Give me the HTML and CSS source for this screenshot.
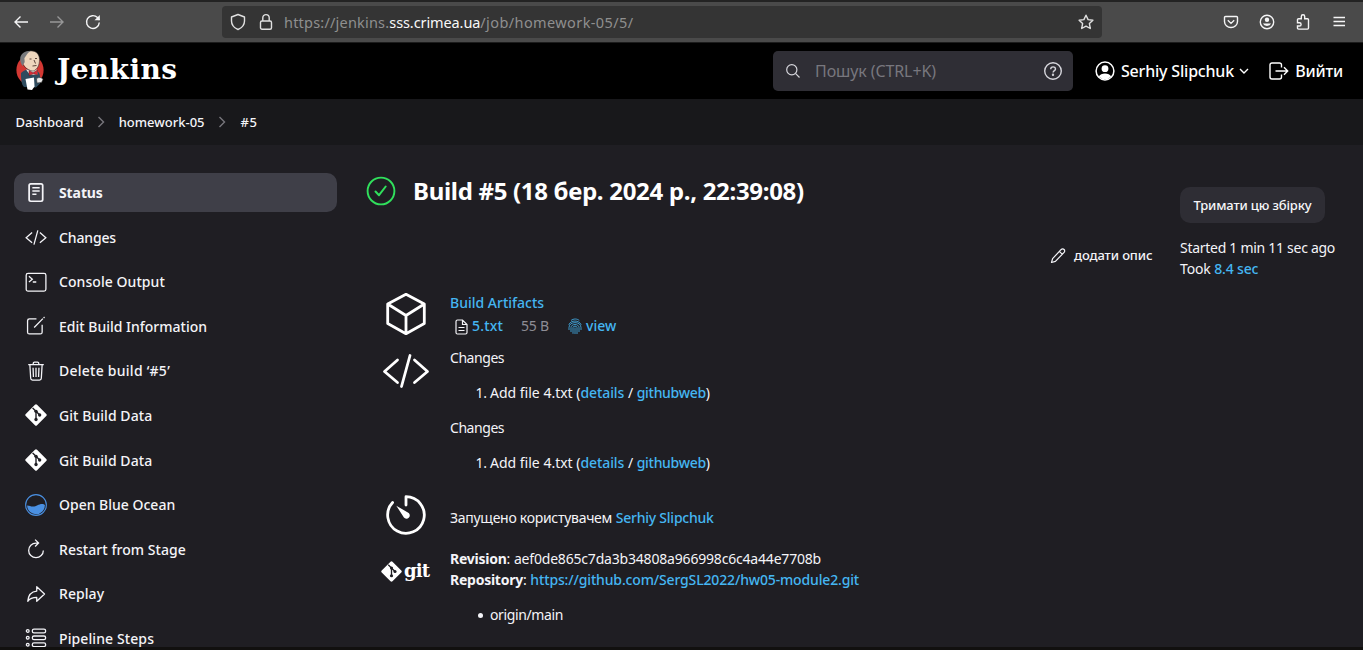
FILE: index.html
```
<!DOCTYPE html>
<html lang="uk">
<head>
<meta charset="utf-8">
<title>homework-05 #5 [Jenkins]</title>
<link rel="stylesheet" href="styles.css">
</head>
<body>
<svg width="0" height="0" class="defs">
  <symbol id="git" viewBox="0 0 24 24"><rect x="3.300" y="3.300" width="17.400" height="17.400" rx="1.600" transform="rotate(45 12 12)" fill="#fff" stroke="none"/><path d="M8.300 4.300 12 8v9M12 8l4 4" stroke="#1f1e23" stroke-width="1.500" fill="none"/><g fill="#1f1e23" stroke="none"><circle cx="12" cy="8" r="1.800"/><circle cx="12" cy="16.900" r="1.800"/><circle cx="16" cy="12" r="1.800"/></g></symbol>
  <symbol id="code" viewBox="0 0 48 36"><path d="M15.500 7 2.500 18.500l13 11M32.500 7l13 11.500-13 11M28 2.500l-8.500 31"/></symbol>
</svg>

<div class="toolbar">
  <div class="nav">
    <svg width="16" height="16" viewBox="0 0 16 16"><path d="M15 8H2M7.500 2.500 2 8l5.500 5.500"/></svg>
    <svg class="off" width="16" height="16" viewBox="0 0 16 16"><path d="M1 8h13M8.500 2.500 14 8l-5.500 5.500"/></svg>
    <svg width="16" height="16" viewBox="0 0 16 16"><path d="M14.300 8.500A6.400 6.400 0 1 1 12.500 3.600L14.500 6"/><path d="M14.800 1v5.300H9.500z" fill="currentColor" stroke="none"/></svg>
  </div>
  <div class="urlbar">
    <svg width="16" height="18" viewBox="0 0 16 18"><path d="M8 1.500 14.500 4v4c0 4-3 7-6.500 8.500C4.500 15 1.500 12 1.500 8V4z" stroke-linejoin="round"/></svg>
    <svg width="14" height="18" viewBox="0 0 14 18"><rect x="1.500" y="8" width="11" height="8.300" rx="1.500"/><path d="M3.800 8V4.800a3.200 3.200 0 0 1 6.400 0V8"/></svg>
    <div class="url"><span class="u1">https://jenkins.</span><span class="host">sss.crimea.ua</span><span class="u2">/job/homework-05/5/</span></div>
    <svg width="16" height="16" viewBox="0 0 16 16"><path d="m8 1.200 2.100 4.400 4.800.6-3.500 3.400.9 4.900L8 12.100l-4.300 2.400.9-4.900L1.100 6.200l4.800-.6z" stroke-linejoin="round"/></svg>
  </div>
  <div class="tools">
    <svg width="16" height="16" viewBox="0 0 16 16"><path d="M2.500 2.500h11a1 1 0 0 1 1 1V7.500a6.500 6 0 0 1-13 0v-4a1 1 0 0 1 1-1zM4.800 6.300 8 9.400l3.200-3.100"/></svg>
    <svg width="16" height="16" viewBox="0 0 16 16"><circle cx="8" cy="8" r="6.700"/><circle cx="8" cy="5.800" r="2.200" fill="currentColor" stroke="none"/><path d="M3.900 9.500h8.200a4.300 3.500 0 0 1-8.200 0z" fill="currentColor" stroke="none"/></svg>
    <svg width="16" height="16" viewBox="0 0 16 16"><path d="M2.500 8V5.700a1 1 0 0 1 1-1h2.800V2.500a1.700 1.700 0 0 1 3.400 0v2.200h2.800a1 1 0 0 1 1 1v8.400a1 1 0 0 1-1 1h-9a1 1 0 0 1-1-1V12h2a1.600 1.600 0 0 0 0-3.200h-2z"/></svg>
    <svg width="16" height="16" viewBox="0 0 16 16"><path d="M2.500 3.500h11.500M2.500 7.500h11.500M2.500 11.500h11.500"/></svg>
  </div>
</div>

<header class="header">
  <svg class="butler" width="30" height="40" viewBox="0 0 30 40">
    <g stroke="none">
    <ellipse cx="15" cy="20" rx="13.600" ry="15" fill="#d33833"/>
    <path d="M6 23c2-2 4-3 6-3.500l8 1c4 1 5 3 5 7v6l-4 4-12-.5C6 34 6 28 6 23z" fill="#2e4b5e"/>
    <path d="M11 19.500 15 25l8-.5-1-5z" fill="#f0e8df"/>
    <path d="M7 9c0-5 5-8 9.500-8 5.500 0 8 4 8 9 0 6-2.500 9.500-6.500 10.500-5.500 0-10.500-5-11-11.500z" fill="#eed6bd"/>
    <path d="M16.500.8C10 .6 5 4 5.200 9c-.2 3 1.300 5.500 2.500 7l2-4-.3-4C11.500 6 11.500 3 16.500.8z" fill="#77797c"/>
    <path d="M10.500 29l8.500-1.500.5 9-2.500 3.500-4.500-.5z" fill="#fff"/>
    </g>
    <path d="M16 .8c5.500 0 8.500 3.900 8.500 8.800 0 6-2.500 10.500-6.500 11.500-4-.4-7.500-2.500-9.500-6" stroke="#332c2b" stroke-width=".6"/>
    <path d="M14.500 9h2M20 8.500h2M19 10l1.500 3.500M17.500 16l4-.5" stroke="#4b332b" stroke-width=".9"/>
    <path d="m14 20.500 4 2.200 4.500-2.700v5l-4-1.200-4.500 1.700z" fill="#d62b36" stroke="#5c1e24" stroke-width=".5"/>
    <path d="M21.500 29c2-2.500 5.500-1.500 6.500.5l-1.500 3-4.500.5z" fill="#e8e8e8" stroke="#333" stroke-width=".6"/>
  </svg>
  <div class="brand">Jenkins</div>
  <div class="search">
    <svg width="16" height="16" viewBox="0 0 16 16" class="thin"><circle cx="6.800" cy="6.800" r="5.100"/><path d="m10.700 10.700 3.800 3.800"/></svg>
    <span class="ph">Пошук (CTRL+K)</span>
    <svg width="20" height="20" viewBox="0 0 20 20" class="help"><circle cx="10" cy="10" r="8.300"/><path d="M7.700 8.200c0-3.200 4.800-3 4.800-.3 0 1.800-2.400 1.700-2.400 3.700"/><circle cx="10" cy="13.800" r=".5"/></svg>
  </div>
  <div class="user">
    <svg width="20" height="20" viewBox="0 0 20 20"><circle cx="10" cy="10" r="8.900" stroke-width="1.500"/><circle cx="10" cy="7.700" r="3.400" fill="#fff" stroke="none"/><path d="M3.800 15.500c2-4 10.400-4 12.400 0a8.500 8.500 0 0 1-12.400 0z" fill="#fff" stroke="none"/></svg>
    <span class="uname">Serhiy Slipchuk</span>
    <svg width="10" height="8" viewBox="0 0 10 8"><path d="m1 2 4 4 4-4"/></svg>
  </div>
  <div class="logout">
    <svg width="20" height="18" viewBox="0 0 20 18"><path d="M12.500 5.500V3a2 2 0 0 0-2-2H3a2 2 0 0 0-2 2v12a2 2 0 0 0 2 2h7.500a2 2 0 0 0 2-2v-2.500M6.500 9H18.500M15 5.300 18.700 9 15 12.700" stroke-width="1.400"/></svg>
    <span>Вийти</span>
  </div>
</header>

<nav class="crumbs">
  <span>Dashboard</span>
  <svg width="8" height="12" viewBox="0 0 8 12"><path d="m1.500 1 5 5-5 5"/></svg>
  <span>homework-05</span>
  <svg width="8" height="12" viewBox="0 0 8 12"><path d="m1.500 1 5 5-5 5"/></svg>
  <span class="num">#5</span>
</nav>

<div class="page">
  <aside class="side">
    <div class="item active"><svg viewBox="0 0 24 24"><rect x="4.500" y="2" width="14.800" height="19" rx="1.800" stroke-width="1.900"/><path d="M8 6.300h8M8 9.800h8M8 13.300h4.500" stroke-width="1.500"/></svg><span>Status</span></div>
    <div class="item"><svg viewBox="0 0 48 36" class="c1"><use href="#code"/></svg><span class="t2">Changes</span></div>
    <div class="item"><svg viewBox="0 0 24 24"><rect x="1.300" y="2.500" width="21.500" height="19.500" rx="2"/><path d="m4.300 5.800 3.700 3.100-3.700 3.100M8.500 12h3.800"/></svg><span class="t3">Console Output</span></div>
    <div class="item"><svg viewBox="0 0 24 24"><path d="M12.500 4.300H4.800a2 2 0 0 0-2 2v12.400a2 2 0 0 0 2 2h11.900a2 2 0 0 0 2-2V10.500M10 13.700 19.500 4M20.300 3.200l1-1"/></svg><span class="t4">Edit Build Information</span></div>
    <div class="item"><svg viewBox="0 0 24 24"><path d="M3.500 5h17M5.300 5l.9 15a2 2 0 0 0 2 1.900h7.600a2 2 0 0 0 2-1.900l.9-15M9 5V3.500a1.300 1.300 0 0 1 1.300-1.300h3.400A1.300 1.300 0 0 1 15 3.500V5M12 8.500v10M8.800 8.500l.4 10M15.200 8.500l-.4 10"/></svg><span class="t5">Delete build ‘#5’</span></div>
    <div class="item"><svg viewBox="0 0 24 24"><use href="#git"/></svg><span class="t3">Git Build Data</span></div>
    <div class="item"><svg viewBox="0 0 24 24"><use href="#git"/></svg><span class="t3">Git Build Data</span></div>
    <div class="item"><svg viewBox="0 0 24 24"><circle cx="12" cy="12" r="11.300" stroke="#4a90e2" stroke-width="1.200"/><path d="M2.300 12.500c2.700 0 3.700 1.200 6.200 1.200 4.500 0 6.500-3.400 11.300-2.800l1.900 1.200A9.700 9.700 0 0 1 2.300 12.500z" fill="#4a90e2" stroke="none"/></svg><span>Open Blue Ocean</span></div>
    <div class="item"><svg viewBox="0 0 24 24"><path d="M20 13.500A8 8 0 1 1 12 5.500h2.300M11 1.800l3.800 3.700L11 9.200"/></svg><span class="t3">Restart from Stage</span></div>
    <div class="item"><svg viewBox="0 0 24 24"><path d="M12.800 4 21.300 12l-8.500 8v-4.300c-4.700 0-7.600 1.300-9.800 4.300.5-6.200 3.800-10.700 9.800-11.200z" stroke-linejoin="round"/></svg><span class="t3">Replay</span></div>
    <div class="item"><svg viewBox="0 0 24 24"><g stroke-width="1.400"><rect x="8" y="2.300" width="14.500" height="4" rx="1.800"/><rect x="8" y="9.800" width="14.500" height="4" rx="1.800"/><rect x="8" y="17.300" width="14.500" height="4" rx="1.800"/><circle cx="3" cy="4.300" r="1.500"/><circle cx="3" cy="11.800" r="1.500"/><circle cx="3" cy="19.300" r="1.500"/></g></svg><span class="t6">Pipeline Steps</span></div>
  </aside>

  <main class="main">
    <div class="head">
      <svg width="30" height="30" viewBox="0 0 30 30"><circle cx="15" cy="15" r="13.400" stroke="#30e05c" stroke-width="1.900"/><path d="m9.500 15.500 3.500 3.700 6.700-8.700" stroke="#30e05c" stroke-width="2" stroke-linecap="round" stroke-linejoin="round"/></svg>
      <h1>Build #5 (18 бер. 2024 р., 22:39:08)</h1>
    </div>
    <div class="rows">
      <div class="ic cube"><svg width="44" height="44" viewBox="0 0 44 44"><path d="M22 2.300 40.300 12v19.500L22 41.700 3.700 31.500V12zM3.700 12 22 23.500 40.300 12M22 23.500v18" stroke-width="2.800" stroke-linejoin="round"/></svg></div>
      <div class="artifacts">
        <a>Build Artifacts</a>
        <div class="files">
          <svg width="13" height="16" viewBox="0 0 13 16"><path d="M1 2.500A1.500 1.500 0 0 1 2.500 1h5L12 5.500v8a1.500 1.500 0 0 1-1.500 1.500h-8A1.500 1.500 0 0 1 1 13.500zM7.500 1v4.500H12M3.500 8.500h6M3.500 11.500h6" stroke-width="1.200"/></svg>
          <a class="file">5.txt</a><span class="size">55 B</span>
          <svg width="14" height="17" viewBox="0 0 14 17" class="fp"><path d="M3 2.500c2.500-2 6-2 8.300 0M.8 6.800c1.800-5 10.400-5 12.400 0M1 12V9.500c0-6.500 12-6.500 12 0V12M3 14V9.500c0-4 8-4 8 0V14M5 15.800V9.500c0-1.800 4-1.800 4 0V16M7 9.500V16"/></svg>
          <a class="view">view</a>
        </div>
      </div>
      <div class="ic code"><svg width="48" height="36" viewBox="0 0 48 36"><use href="#code"/></svg></div>
      <div class="changes">
        <p class="ch">Changes</p>
        <ol><li><span class="add">Add file 4.txt (</span><a>details</a> / <a class="gw">githubweb</a>)</li></ol>
        <p class="ch">Changes</p>
        <ol><li><span class="add">Add file 4.txt (</span><a>details</a> / <a class="gw">githubweb</a>)</li></ol>
      </div>
      <div class="ic clock"><svg width="44" height="44" viewBox="0 0 44 44"><path d="M22 12V3.700A18.300 18.300 0 1 1 8.600 9.500" stroke-width="2.800" stroke-linecap="round" stroke-linejoin="round"/><path d="M12.300 12.700 24.700 20a3.300 3.300 0 1 1-4.800 4.500z" fill="#fff" stroke="none"/></svg></div>
      <div class="cause"><span class="by">Запущено користувачем</span> <a class="who">Serhiy Slipchuk</a></div>
      <div class="ic gitlogo"><svg width="21" height="21" viewBox="0 0 24 24"><use href="#git"/></svg><b>git</b></div>
      <div class="rev">
        <div><b>Revision</b>: <span class="sha">aef0de865c7da3b34808a966998c6c4a44e7708b</span></div>
        <div><b class="repo">Repository</b>: <a class="link">https://github.com/SergSL2022/hw05-module2.git</a></div>
        <ul><li>origin/main</li></ul>
      </div>
    </div>
  </main>

  <div class="edit">
    <svg width="16" height="16" viewBox="0 0 16 16"><path d="m10.300 2.300.9-.8a1.900 1.900 0 0 1 2.900 2.900l-8.700 9-3.900 1.100 1.100-3.800zM9.300 3.300l2.900 2.900" stroke-width="1.200" stroke-linejoin="round"/></svg>
    <span>додати опис</span>
  </div>
  <div class="info">
    <button class="keep">Тримати цю збірку</button>
    <div class="started">Started 1 min 11 sec ago</div>
    <div class="took">Took <a>8.4 sec</a></div>
  </div>
</div>
<div class="bottom"></div>
</body>
</html>
```
FILE: styles.css
```
* { box-sizing: border-box; }
body {
  margin: 0; height: 650px; overflow: hidden; background: #1f1e23; color: #f4f4f8;
  font: 400 14px/21px "Noto Sans", "Liberation Sans", sans-serif;
  display: flex; flex-direction: column;
}
svg { fill: none; stroke: currentColor; stroke-width: 1.4; flex: none; display: block; }
.defs { position: absolute; }
p, ol, ul, h1 { margin: 0; padding: 0; }
a { color: #45b6f2; font-weight: 500; }
span, a, b, h1 { white-space: nowrap; }

.toolbar {
  height: 43px; flex: none; display: flex; align-items: center; padding: 2px 16px 0 13px;
  background: #4a4a4a; border-top: 2px solid #232323; border-bottom: 1px solid #1c1c1c; color: #f5f5f6;
}
.toolbar > * { margin-top: -2px; }
.nav { display: flex; gap: 20px; width: 209px; }
.off { opacity: .45; }
.urlbar {
  width: 880px; height: 32px; padding: 0 8px; background: #343434; border-radius: 4px;
  display: flex; align-items: center; color: #e0e0e0;
}
.urlbar svg + svg { margin-left: 13px; }
.url { flex: 1; margin-left: 11px; font-size: 14.500px; color: #8f8f8f; }
.u1 { letter-spacing: .2px; }
.host { color: #f8f8f8; letter-spacing: -.1px; }
.u2 { letter-spacing: .4px; }
.tools { display: flex; gap: 20px; margin-left: auto; }

.header { height: 56px; flex: none; background: #000; display: flex; align-items: center; padding: 0 20px 0 15px; color: #fff; }
.butler { margin-top: -2px; }
.brand { margin: -2px 0 0 12px; font: bold 28px/40px "DejaVu Serif", serif; letter-spacing: .4px; width: 716px; }
.search { width: 300px; height: 40px; border-radius: 5px; background: #2f2e35; display: flex; align-items: center; padding: 0 10px 0 12px; color: #d6d6dc; }
.ph { flex: 1; margin-left: 14px; font-size: 16px; color: #78777e; letter-spacing: -.1px; }
.thin { stroke-width: 1.2; }
.user, .logout { display: flex; align-items: center; font-size: 16px; font-weight: 500; letter-spacing: -.2px; }
.user { margin-left: 22px; }
.uname { margin: 0 5px 0 6px; }
.logout { margin-left: auto; gap: 6px; }

.crumbs { height: 46px; flex: none; background: #18181b; display: flex; align-items: center; padding: 0 15.500px; font-size: 13px; font-weight: 500; }
.crumbs svg { margin: 0 14px 0 13px; color: #77767c; }
.num { letter-spacing: .5px; margin-left: 1px; }

.page { flex: 1; min-height: 0; overflow: hidden; display: flex; padding: 28px 0 0 14px; }
.side { width: 323px; flex: none; display: flex; flex-direction: column; gap: 5.600px; }
.item { height: 39px; flex: none; display: flex; align-items: center; gap: 12px; padding: 0 0 0 11px; border-radius: 10px; font-weight: 500; }
.item svg { width: 22px; height: 22px; }
.active { background: #3f3f48; font-weight: 700; letter-spacing: -.1px; }
.item .c1 { stroke-width: 2.800; height: 17px; }
.t2 { letter-spacing: -.14px; }
.t3 { letter-spacing: .06px; }
.t5 { letter-spacing: .25px; }
.t6 { letter-spacing: .1px; }

.main { margin-left: 29px; width: 684px; flex: none; }
.head { display: flex; align-items: center; gap: 17px; height: 36px; }
h1 { font-size: 24px; line-height: 36px; font-weight: 700; letter-spacing: -.31px; color: #fff; }
.rows { display: grid; grid-template-columns: 68px 1fr; grid-template-rows: 56px 140px 56px 90px; column-gap: 16px; margin-top: 82px; }
.ic { color: #fff; padding-left: 16px; }
.cube { padding: 1px 0 0 18px; }
.artifacts { padding-top: 1px; }
.files { display: flex; align-items: center; margin: 2px 0 0 5px; }
.files svg { margin-top: 3px; }
.file { margin-left: 4px; letter-spacing: .17px; width: 49px; }
.size { color: #8e8d95; width: 47px; letter-spacing: -.19px; }
.files .fp { color: #45b6f2; stroke-width: .8; margin-top: 2px; }
.view { margin-left: 4px; }
.code { padding-top: 6px; }
.code svg { stroke-width: 2.800; stroke-linecap: round; stroke-linejoin: round; }
.ch { letter-spacing: -.44px; }
ol, ul { padding-left: 40px; margin: 14px 0; }
li::marker { letter-spacing: -.3px; }
ol a { letter-spacing: -.1px; }
ol .gw { letter-spacing: -.31px; }
.clock { padding: 6px 0 0 18px; }
.cause { padding-top: 20px; }
.by { letter-spacing: -.28px; }
.who { letter-spacing: -.23px; }
.gitlogo { padding: 18px 0 0 15px; display: flex; align-items: flex-start; gap: 2px; }
.gitlogo b { font: bold 18px/20px "DejaVu Serif", serif; letter-spacing: -.8px; }
.rev { padding-top: 5px; }
.rev b { letter-spacing: -.25px; }
.sha { letter-spacing: -.19px; }
.link { letter-spacing: -.15px; }
ul { list-style: none; }
ul li { letter-spacing: -.38px; display: flex; align-items: center; margin-left: -12px; }
ul li::before { content: ""; width: 5px; height: 5px; border-radius: 50%; background: #f4f4f8; margin: 2px 7px 0 0; }

.edit { margin: 72px 0 0; width: 130px; height: 21px; flex: none; display: flex; align-items: center; gap: 8px; font-size: 13px; font-weight: 500; letter-spacing: -.1px; }
.info { padding-top: 14px; display: flex; flex-direction: column; align-items: flex-start; }
.keep { width: 145px; height: 36px; padding: 0; border: 0; border-radius: 10px; background: #2e2d34; color: #f7f7fa; font: 500 13px "Noto Sans", sans-serif; letter-spacing: -.15px; margin-bottom: 14px; }
.started { letter-spacing: -.28px; white-space: nowrap; }
.took { letter-spacing: -.15px; }
.bottom { height: 3px; flex: none; background: #11100f; }
```
